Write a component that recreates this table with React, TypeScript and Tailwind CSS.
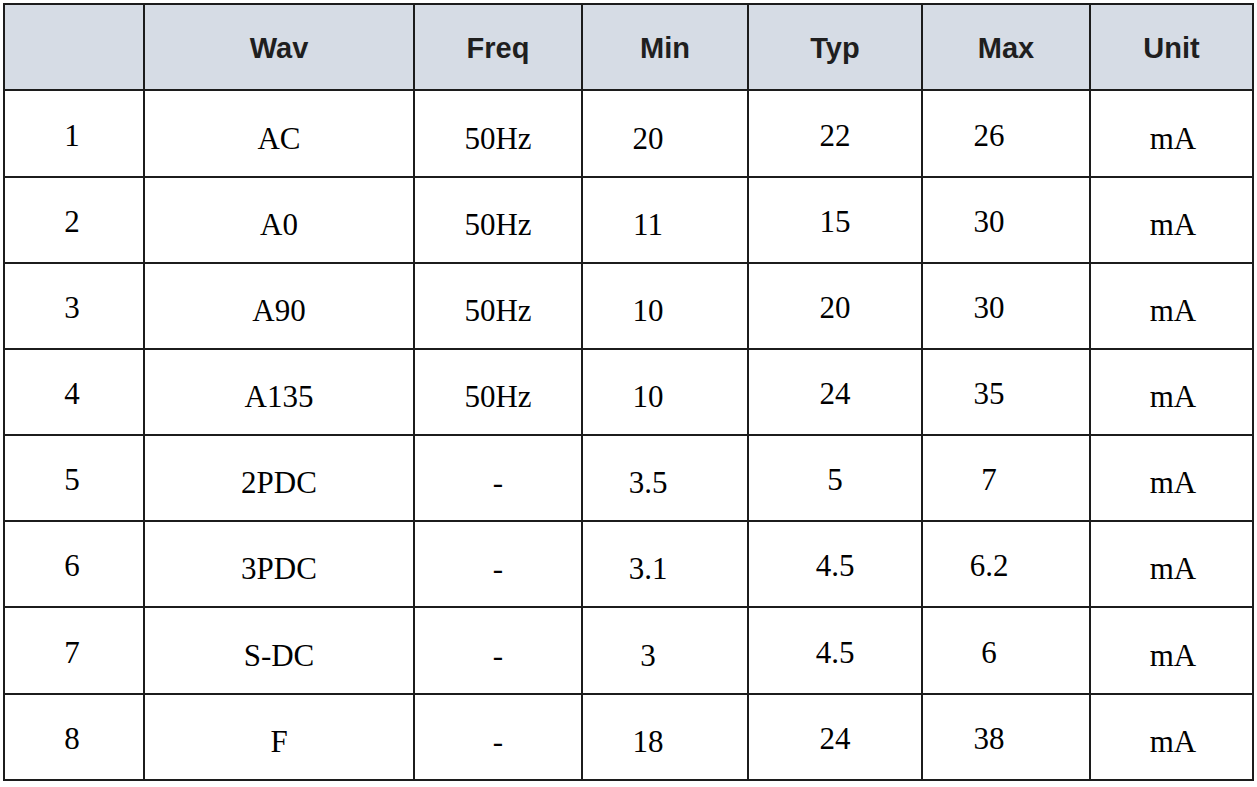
const headers = ["", "Wav", "Freq", "Min", "Typ", "Max", "Unit"];

const rows = [
  ["1", "AC", "50Hz", "20", "22", "26", "mA"],
  ["2", "A0", "50Hz", "11", "15", "30", "mA"],
  ["3", "A90", "50Hz", "10", "20", "30", "mA"],
  ["4", "A135", "50Hz", "10", "24", "35", "mA"],
  ["5", "2PDC", "-", "3.5", "5", "7", "mA"],
  ["6", "3PDC", "-", "3.1", "4.5", "6.2", "mA"],
  ["7", "S-DC", "-", "3", "4.5", "6", "mA"],
  ["8", "F", "-", "18", "24", "38", "mA"],
];

// per-column tweaks: some columns sit higher, Min/Max sit left of centre
const cellClass = [
  "pt-[5px] pr-[4px]",
  "pt-[11px]",
  "pt-[11px]",
  "pt-[11px] pr-[34px]",
  "pt-[5px]",
  "pt-[5px] pr-[34px]",
  "pt-[11px] pl-[3px]",
];

const App = () => {
  return (
    <div className="w-[1257px] h-[787px] bg-white pt-[3px] pl-[3px]">
      <div className="grid w-[1251px] grid-cols-[138px_268px_166px_164px_172px_166px_161px] grid-rows-[84px_85px_84px_84px_84px_84px_84px_85px_84px] gap-[2px] bg-[#1c1c1c] p-[2px]">
        {headers.map((h, i) => (
          <div
            key={"h" + i}
            className="flex items-center justify-center bg-[#d6dce5] pt-[3px] text-[29px] font-bold text-[#1f1f1f] font-['Liberation_Sans',Arial,sans-serif]"
          >
            {h}
          </div>
        ))}
        {rows.map((row, r) =>
          row.map((v, c) => (
            <div
              key={r + "-" + c}
              className={
                "flex items-center justify-center bg-white text-[31px] text-black font-['Liberation_Serif','Times_New_Roman',serif] " +
                cellClass[c]
              }
            >
              {v}
            </div>
          ))
        )}
      </div>
    </div>
  );
};

export default App;
